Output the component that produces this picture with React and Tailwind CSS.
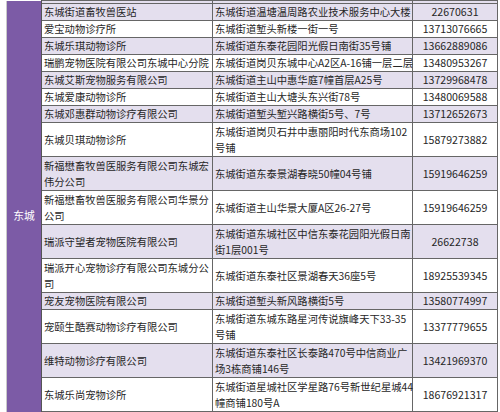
import React from "react";

const rows = [
  { n: ["东城街道畜牧兽医站"], a: ["东城街道温塘温周路农业技术服务中心大楼"], p: "22670631" },
  { n: ["爱宝动物诊疗所"], a: ["东城街道堑头新楼一街一号"], p: "13713076665" },
  { n: ["东城乐琪动物诊所"], a: ["东城街道东泰花园阳光假日南街35号铺"], p: "13662889086" },
  { n: ["瑞鹏宠物医院有限公司东城中心分院"], a: ["东城街道岗贝东城中心A2区A-16铺一层二层"], p: "13480953267" },
  { n: ["东城艾斯宠物服务有限公司"], a: ["东城街道主山中惠华庭7幢首层A25号"], p: "13729968478" },
  { n: ["东城爱康动物诊所"], a: ["东城街道主山大塘头东兴街78号"], p: "13480069588" },
  { n: ["东城邓惠群动物诊疗有限公司"], a: ["东城街道堑头堑兴路横街5号、7号"], p: "13712652673" },
  { n: ["东城贝琪动物诊所"], a: ["东城街道岗贝石井中惠丽阳时代东商场102", "号铺"], p: "15879273882", d: true },
  { n: ["新福懋畜牧兽医服务有限公司东城宏", "伟分公司"], a: ["东城街道东泰景湖春晓50幢04号铺"], p: "15919646259", d: true },
  { n: ["新福懋畜牧兽医服务有限公司华景分", "公司"], a: ["东城街道主山华景大厦A区26-27号"], p: "15919646259", d: true },
  { n: ["瑞派守望者宠物医院有限公司"], a: ["东城街道东城社区中信东泰花园阳光假日南", "街1层001号"], p: "26622738", d: true },
  { n: ["瑞派开心宠物诊疗有限公司东城分公", "司"], a: ["东城街道东泰社区景湖春天36座5号"], p: "18925539345", d: true },
  { n: ["宠友宠物医院有限公司"], a: ["东城街道堑头新风路横街5号"], p: "13580774997" },
  { n: ["宠颐生酷赛动物诊疗有限公司"], a: ["东城街道东城东路星河传说旗峰天下33-35", "号铺"], p: "13377779655", d: true },
  { n: ["维特动物诊疗有限公司"], a: ["东城街道东泰社区长泰路470号中信商业广", "场3栋商铺146号"], p: "13421969370", d: true },
  { n: ["东城乐尚宠物诊所"], a: ["东城街道星城社区学星路76号新世纪星城44", "幢商铺180号A"], p: "18676921317", d: true },
];

function Lines({ lines }) {
  return lines.map((l, i) => (
    <div key={i} className="whitespace-nowrap">
      {l}
    </div>
  ));
}

export default function App() {
  return (
    <div
      className="w-[500px] h-[412px] overflow-hidden bg-white"
      style={{ fontFamily: '"Noto Sans CJK SC", "Noto Sans", sans-serif' }}
    >
      <table className="ml-[6px] w-[491px] table-fixed border-collapse text-[10.3px] leading-[16px] text-[#262626]">
        <colgroup>
          <col className="w-[35px]" />
          <col className="w-[171px]" />
          <col className="w-[200px]" />
          <col className="w-[85px]" />
        </colgroup>
        <tbody>
          <tr className="h-[3px] bg-[#e4dfee]">
            <td
              rowSpan={rows.length + 2}
              className="bg-[#7c5ba6] border-l border-l-[#c9c9c9] border-r border-r-[#555] text-white text-center align-middle text-[10.8px] p-0"
            >
              东城
            </td>
            <td className="border border-[#666] p-0"></td>
            <td className="border border-[#666] p-0"></td>
            <td className="border border-[#666] p-0"></td>
          </tr>
          {rows.map((r, i) => (
            <tr
              key={i}
              className={`${r.d ? "h-[34px]" : "h-[16.8px]"} ${i % 2 === 0 ? "bg-[#e4dfee]" : "bg-white"}`}
            >
              <td className="border border-[#666] px-[2px] py-0 align-middle">
                <Lines lines={r.n} />
              </td>
              <td className="border border-[#666] px-[2px] py-0 align-middle">
                <Lines lines={r.a} />
              </td>
              <td className="border border-[#666] p-0 text-center align-middle text-[10.6px]">
                {r.p}
              </td>
            </tr>
          ))}
          <tr className="h-[17px] bg-[#e4dfee]">
            <td className="border border-[#666] p-0"></td>
            <td className="border border-[#666] p-0"></td>
            <td className="border border-[#666] p-0"></td>
          </tr>
        </tbody>
      </table>
    </div>
  );
}
